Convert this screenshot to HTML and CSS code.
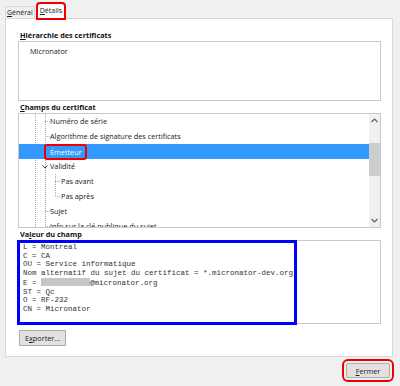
FILE: index.html
```html
<!DOCTYPE html>
<html lang="fr">
<head>
<meta charset="utf-8">
<title>Certificat</title>
<link rel="stylesheet" href="styles.css">
</head>
<body>
<div class="tabs">
  <div class="tab"><u>G</u>énéral</div>
  <div class="tab tab-active"><u>D</u>étails</div>
</div>
<div class="panel">
  <div class="label"><u>H</u>iérarchie des certificats</div>
  <div class="box hier">
    <div class="hier-item">Micronator</div>
  </div>
  <div class="label"><u>C</u>hamps du certificat</div>
  <div class="box tree">
    <div class="tree-body">
      <div class="row l1">Numéro de série</div>
      <div class="row l1">Algorithme de signature des certificats</div>
      <div class="row l1 selected"><span class="mark">Émetteur</span></div>
      <div class="row l1 parent"><svg class="chev" width="6" height="4" viewBox="0 0 6 4"><path d="M0.5 0.5 L3 3 L5.5 0.5" fill="none" stroke="#444" stroke-width="1"/></svg>Validité</div>
      <div class="row l2">Pas avant</div>
      <div class="row l2">Pas après</div>
      <div class="row l1">Sujet</div>
      <div class="row l1">Info sur la clé publique du sujet</div>
    </div>
    <div class="scrollbar">
      <svg class="arrow" width="7" height="5" viewBox="0 0 7 5"><path d="M0.5 4 L3.5 1 L6.5 4" fill="none" stroke="#606060" stroke-width="1.2"/></svg>
      <div class="track"><div class="thumb"></div></div>
      <svg class="arrow" width="7" height="5" viewBox="0 0 7 5"><path d="M0.5 1 L3.5 4 L6.5 1" fill="none" stroke="#606060" stroke-width="1.2"/></svg>
    </div>
  </div>
  <div class="label">Va<u>l</u>eur du champ</div>
  <div class="box value">
    <div class="value-text">L = Montreal
C = CA
OU = Service informatique
Nom alternatif du sujet du certificat = *.micronator-dev.org
E = <span class="redact"></span>@micronator.org
ST = Qc
O = RF-232
CN = Micronator</div>
    <div class="annot-blue"></div>
  </div>
  <div class="actions">
    <button class="btn export">E<u>x</u>porter...</button>
  </div>
</div>
<div class="footer">
  <button class="btn close"><u>F</u>ermer</button>
</div>
</body>
</html>
```
FILE: styles.css
```css
html, body {
  margin: 0;
  padding: 0;
}
body {
  width: 400px;
  height: 386px;
  background: #f0f0f0;
  font-family: "Open Sans", "Noto Sans", sans-serif;
  font-size: 7.3px;
  color: #1a1a1a;
  overflow: hidden;
}
u { text-decoration: underline; text-underline-offset: 1px; }

.tabs {
  display: flex;
  align-items: flex-end;
  height: 18px;
  padding-left: 5px;
}
.tab {
  height: 12px;
  line-height: 11px;
  padding: 0 1px;
  border: 1px solid #d9d9d9;
  border-bottom: none;
  background: #f0f0f0;
  box-sizing: border-box;
  white-space: nowrap;
  font-size: 7px;
}
.tab-active {
  height: 16px;
  line-height: 13px;
  padding: 0 2px;
  margin-left: 2px;
  background: #fff;
  margin-bottom: -1px;
  position: relative;
  z-index: 1;
  outline: 2px solid #ee0000;
  outline-offset: -1px;
  border-radius: 3px 3px 0 0;
}

.panel {
  margin-left: 5px;
  width: 388px;
  height: 339px;
  box-sizing: border-box;
  border: 1px solid #d9d9d9;
  background: #fff;
  padding: 10px 0 0 12px;
  display: flex;
  flex-direction: column;
}
.label {
  height: 12px;
  line-height: 12px;
  font-weight: bold;
  color: #111;
  padding-left: 2px;
}
.box {
  width: 363px;
  box-sizing: border-box;
  border: 1px solid #c9c9c9;
  background: #fff;
}
.hier {
  height: 60px;
  padding: 3px 0 0 11px;
}
.hier-item { line-height: 12px; }

.tree {
  height: 115px;
  display: flex;
  overflow: hidden;
}
.tree-body {
  flex: 1;
  overflow: hidden;
  background:
    repeating-linear-gradient(to bottom, #a8a8a8 0 1px, transparent 1px 2px) 16px 0 / 1px 100% no-repeat,
    repeating-linear-gradient(to bottom, #a8a8a8 0 1px, transparent 1px 2px) 26px 0 / 1px 100% no-repeat,
    repeating-linear-gradient(to bottom, #a8a8a8 0 1px, transparent 1px 2px) 36px 60px / 1px 24px no-repeat;
}
.row {
  height: 15px;
  line-height: 15px;
  white-space: nowrap;
  position: relative;
}
.row.l1 { padding-left: 31px; }
.row.l2 { padding-left: 42px; }
.row.l1::before, .row.l2::before {
  content: "";
  position: absolute;
  top: 7px;
  width: 5px;
  border-top: 1px dotted #a8a8a8;
}
.row.l1::before { left: 26px; }
.row.l2::before { left: 36px; }
.row.parent::before { display: none; }
.chev {
  position: absolute;
  left: 23px;
  top: 6px;
}
.row.selected {
  background: #3399ff;
  color: #fff;
}
.row.selected::before { display: none; }
.mark {
  display: inline-block;
  margin-left: -6px;
  padding: 0 3px 0 4px;
  line-height: 12px;
  border: 2px solid #ee0000;
  border-radius: 3px;
  vertical-align: top;
}
.scrollbar {
  width: 11px;
  background: #f0f0f0;
  display: flex;
  flex-direction: column;
  align-items: center;
}
.arrow { flex: none; margin: 4px 0 4px; }
.track {
  flex: 1;
  width: 100%;
  padding-top: 16px;
  box-sizing: border-box;
}
.thumb {
  width: 100%;
  height: 33px;
  background: #cdcdcd;
}

.value {
  height: 84px;
  position: relative;
  padding: 2px 0 0 4px;
}
.value-text {
  font-family: "Liberation Mono", monospace;
  font-size: 7.5px;
  line-height: 8.7px;
  white-space: pre;
  color: #333;
}
.redact {
  display: inline-block;
  width: 49px;
  height: 8px;
  background: #c6c6c6;
  vertical-align: -1px;
}
.annot-blue {
  position: absolute;
  left: -2px;
  top: -1px;
  width: 280px;
  height: 85px;
  box-sizing: border-box;
  border: 3px solid #0000ff;
}

.actions {
  padding-top: 6px;
}
.btn {
  font-family: "Open Sans", "Noto Sans", sans-serif;
  font-size: 7.3px;
  color: #1a1a1a;
  background: #e1e1e1;
  border: 1px solid #adadad;
  border-radius: 0;
  padding: 0;
  margin: 0;
  box-sizing: border-box;
}
.export {
  width: 47px;
  height: 16px;
  margin-left: 1px;
}
.footer {
  display: flex;
  justify-content: flex-end;
  padding: 6px 10px 0 0;
}
.close {
  width: 44px;
  height: 15px;
  outline: 2px solid #ee0000;
  outline-offset: 2px;
  border-radius: 2px;
}
```
